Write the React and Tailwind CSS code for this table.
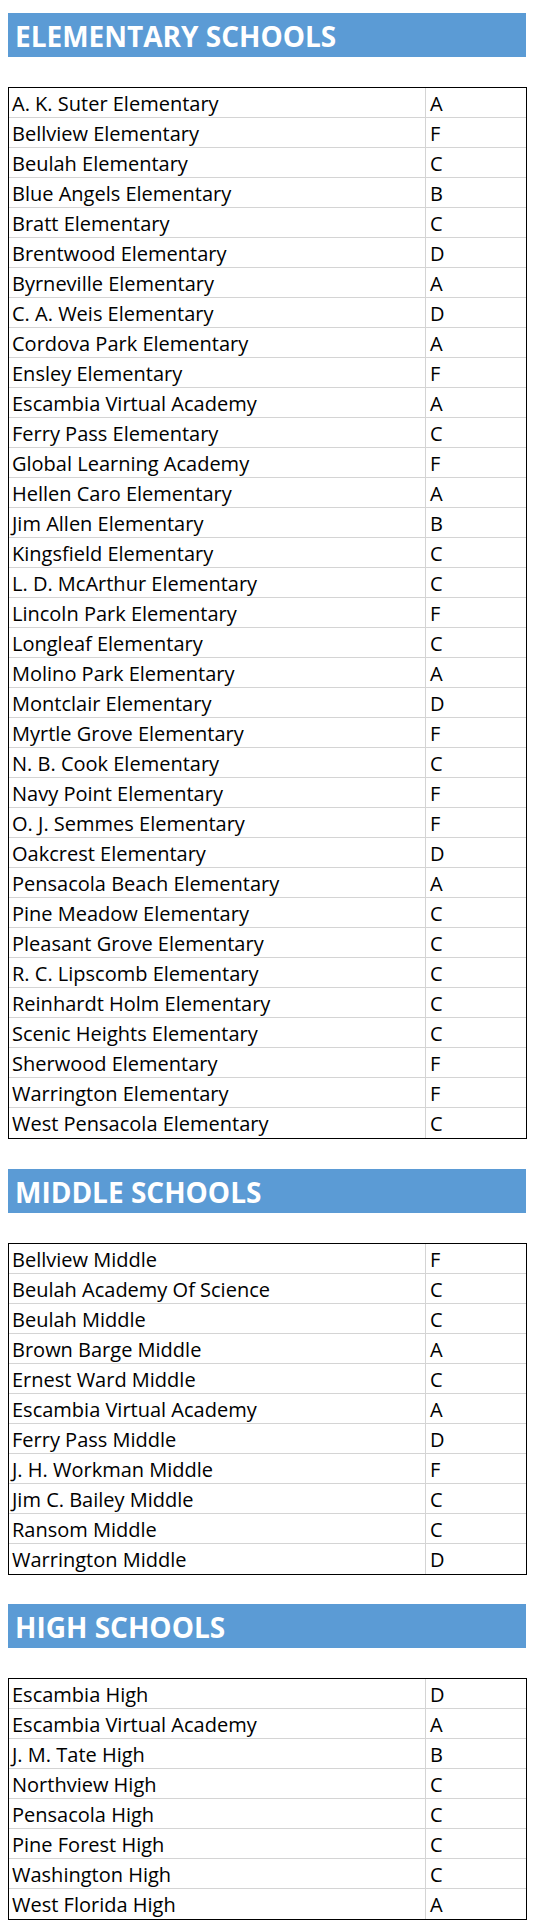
import React from "react";

const elementary = [
  ["A. K. Suter Elementary", "A"],
  ["Bellview Elementary", "F"],
  ["Beulah Elementary", "C"],
  ["Blue Angels Elementary", "B"],
  ["Bratt Elementary", "C"],
  ["Brentwood Elementary", "D"],
  ["Byrneville Elementary", "A"],
  ["C. A. Weis Elementary", "D"],
  ["Cordova Park Elementary", "A"],
  ["Ensley Elementary", "F"],
  ["Escambia Virtual Academy", "A"],
  ["Ferry Pass Elementary", "C"],
  ["Global Learning Academy", "F"],
  ["Hellen Caro Elementary", "A"],
  ["Jim Allen Elementary", "B"],
  ["Kingsfield Elementary", "C"],
  ["L. D. McArthur Elementary", "C"],
  ["Lincoln Park Elementary", "F"],
  ["Longleaf Elementary", "C"],
  ["Molino Park Elementary", "A"],
  ["Montclair Elementary", "D"],
  ["Myrtle Grove Elementary", "F"],
  ["N. B. Cook Elementary", "C"],
  ["Navy Point Elementary", "F"],
  ["O. J. Semmes Elementary", "F"],
  ["Oakcrest Elementary", "D"],
  ["Pensacola Beach Elementary", "A"],
  ["Pine Meadow Elementary", "C"],
  ["Pleasant Grove Elementary", "C"],
  ["R. C. Lipscomb Elementary", "C"],
  ["Reinhardt Holm Elementary", "C"],
  ["Scenic Heights Elementary", "C"],
  ["Sherwood Elementary", "F"],
  ["Warrington Elementary", "F"],
  ["West Pensacola Elementary", "C"],
];

const middle = [
  ["Bellview Middle", "F"],
  ["Beulah Academy Of Science", "C"],
  ["Beulah Middle", "C"],
  ["Brown Barge Middle", "A"],
  ["Ernest Ward Middle", "C"],
  ["Escambia Virtual Academy", "A"],
  ["Ferry Pass Middle", "D"],
  ["J. H. Workman Middle", "F"],
  ["Jim C. Bailey Middle", "C"],
  ["Ransom Middle", "C"],
  ["Warrington Middle", "D"],
];

const high = [
  ["Escambia High", "D"],
  ["Escambia Virtual Academy", "A"],
  ["J. M. Tate High", "B"],
  ["Northview High", "C"],
  ["Pensacola High", "C"],
  ["Pine Forest High", "C"],
  ["Washington High", "C"],
  ["West Florida High", "A"],
];

const SectionHeader = ({ title }) => (
  <div className="h-[44px] bg-[#5b9bd5] flex items-center pl-[7px]">
    <h2 className="text-[28px] font-bold text-white leading-none pt-[2px]">
      {title}
    </h2>
  </div>
);

const GradeTable = ({ rows }) => (
  <div className="mt-[30px] w-[519px] border border-black">
    {rows.map(([name, grade], i) => (
      <div
        key={name + i}
        className={`flex h-[30px] ${
          i < rows.length - 1 ? "border-b border-[#d4d4d4]" : ""
        }`}
      >
        <div className="w-[417px] shrink-0 border-r border-[#d4d4d4] pl-[3px] flex items-center pt-[2px] text-[20px] text-black leading-none">
          {name}
        </div>
        <div className="flex-1 pl-[4px] flex items-center pt-[2px] text-[20px] text-black leading-none">
          {grade}
        </div>
      </div>
    ))}
  </div>
);

export default function App() {
  return (
    <div
      className="w-[540px] bg-white pt-[13px] pb-[5px] pl-[8px] pr-[13px]"
      style={{ fontFamily: "'Open Sans', Lato, sans-serif" }}
    >
      <div className="w-[518px]">
        <SectionHeader title="ELEMENTARY SCHOOLS" />
      </div>
      <GradeTable rows={elementary} />
      <div className="mt-[30px] w-[518px]">
        <SectionHeader title="MIDDLE SCHOOLS" />
      </div>
      <GradeTable rows={middle} />
      <div className="mt-[29px] w-[518px]">
        <SectionHeader title="HIGH SCHOOLS" />
      </div>
      <GradeTable rows={high} />
    </div>
  );
}
